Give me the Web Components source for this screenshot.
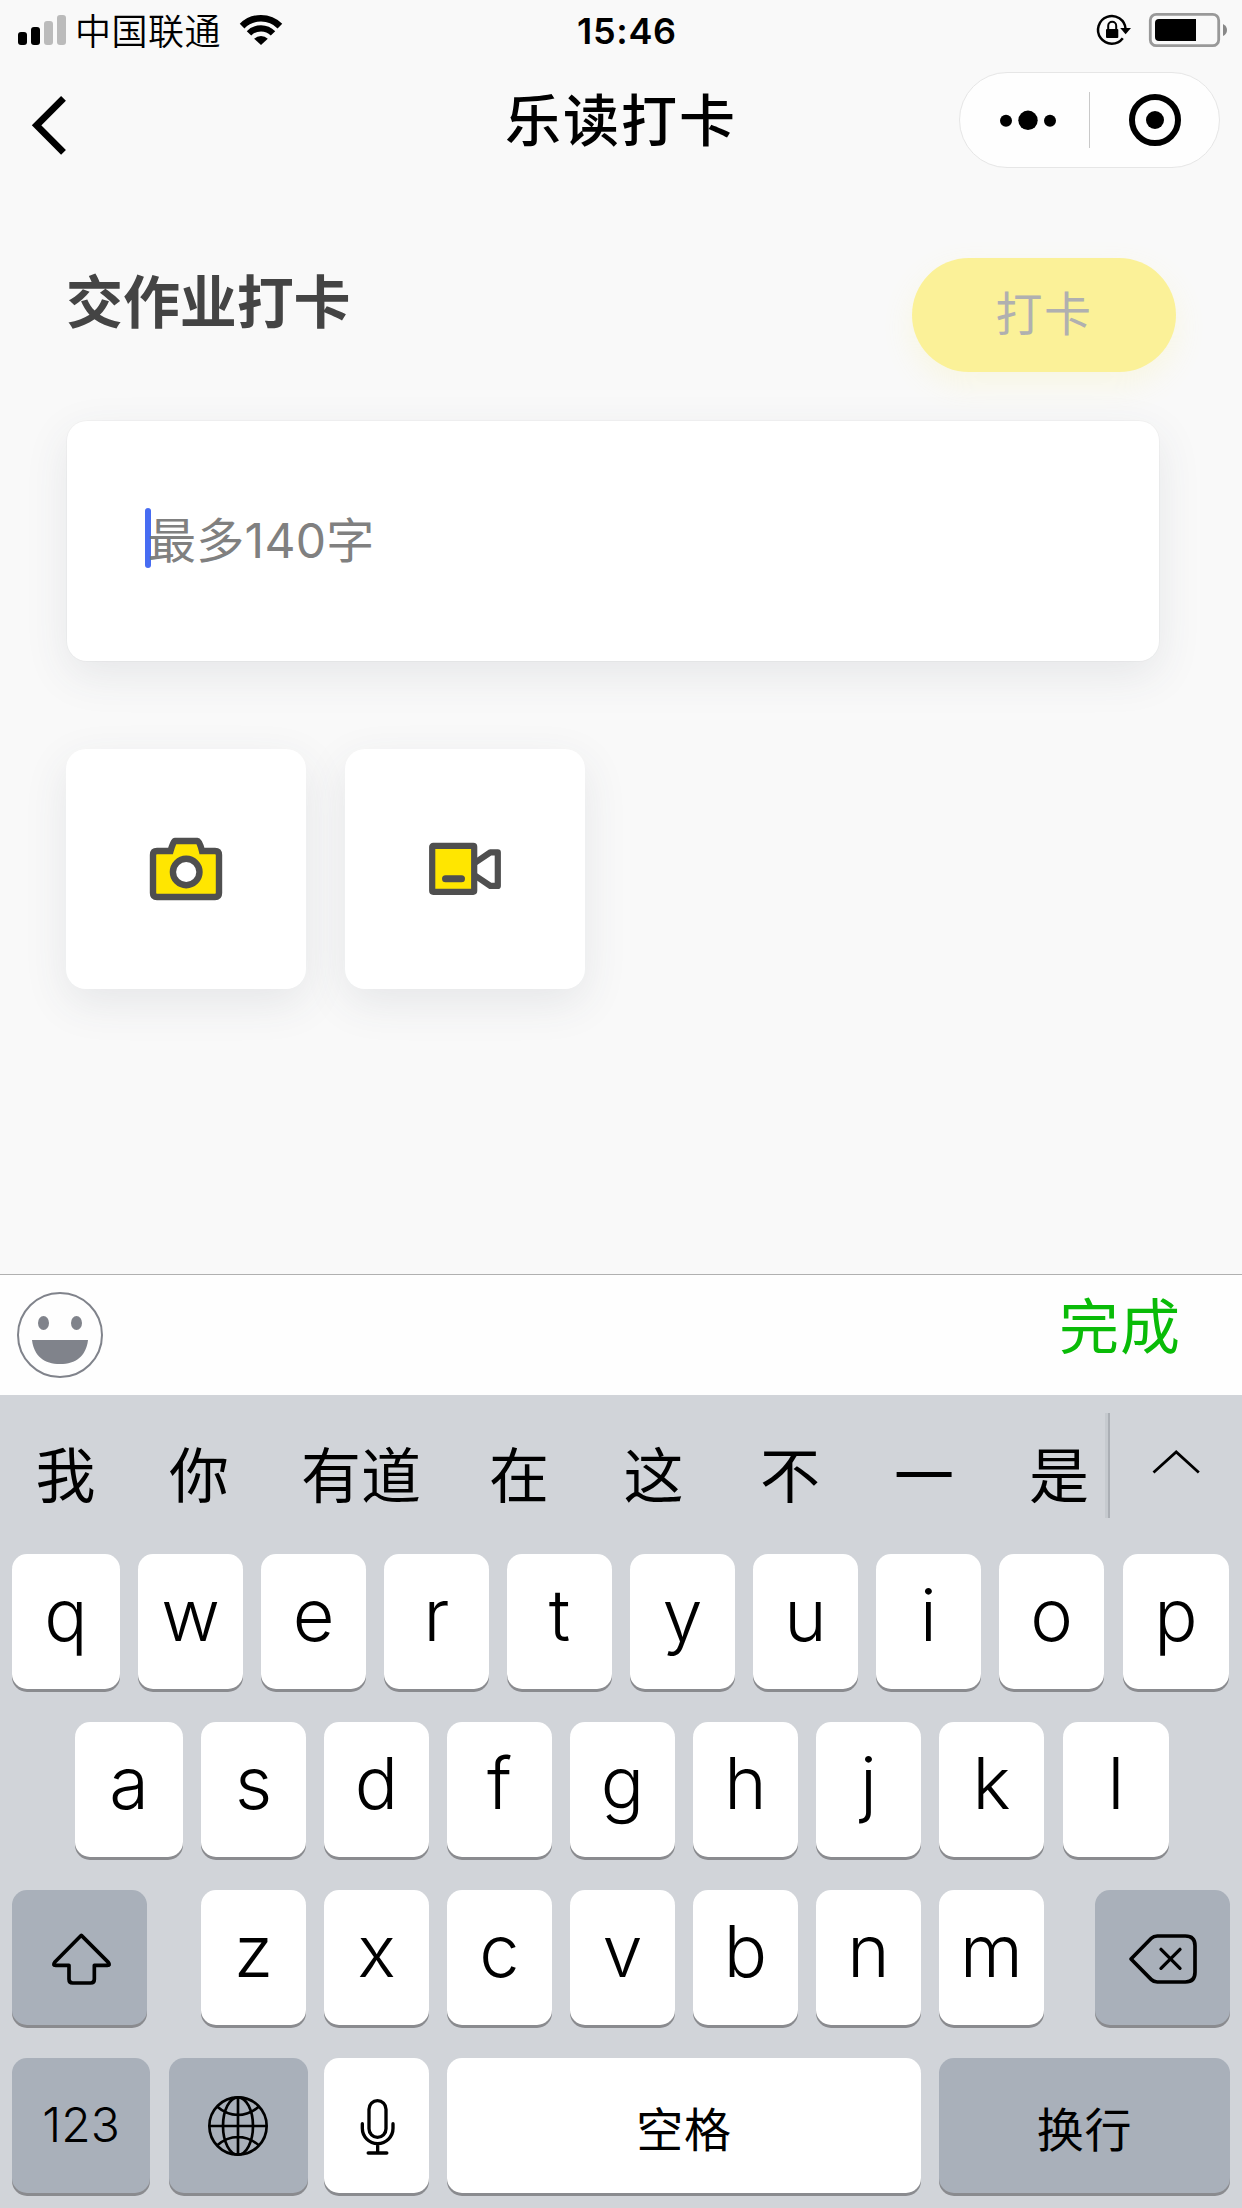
<!DOCTYPE html>
<html lang="zh-CN">
<head>
<meta charset="utf-8">
<title>乐读打卡</title>
<style>
html,body{margin:0;padding:0}
body{width:1242px;height:2208px;overflow:hidden;background:#f9f9f9;font-family:"Noto Sans CJK SC",sans-serif;color:#000}
</style>
</head>
<body>
<checkin-app></checkin-app>
<script>
const define = (name, css, html) => {
  const tpl = document.createElement('template');
  tpl.innerHTML = `<style>*{box-sizing:border-box}svg{display:block;flex:none}${css}</style>${html}`;
  customElements.define(name, class extends HTMLElement {
    constructor() {
      super();
      this.attachShadow({ mode: 'open' }).appendChild(tpl.content.cloneNode(true));
    }
  });
};

define('status-bar', `
:host{display:grid;grid-template-columns:577px 1fr auto;height:60px;padding-right:15px}
.left{display:flex;padding-left:18px}
.carrier{font-size:36px;font-weight:350;line-height:59px;margin-left:9px;letter-spacing:.5px;white-space:nowrap}
.wifi{margin-left:18px}
.time{font:600 36px/62px Inter,sans-serif;letter-spacing:.7px}
.right{display:flex}
`, `
<div class="left">
  <svg width="48" height="60"><rect y="32" width="9" height="13" rx="3"/><rect x="13" y="27" width="9" height="18" rx="3"/><g fill="#bbb"><rect x="26" y="21" width="9" height="24" rx="3"/><rect x="39" y="15" width="9" height="30" rx="3"/></g></svg>
  <span class="carrier">中国联通</span>
  <svg class="wifi" width="44" height="60" viewBox="239 0 44 60"><g fill="none" stroke="#000"><path d="M242.1 26.1A26.7 26.7 0 0 1 279.9 26.1" stroke-width="6.6"/><path d="M249 33.4A16.7 16.7 0 0 1 273 33.4" stroke-width="6.2"/></g><path d="M261 45L254.2 38.8A9.6 9.6 0 0 1 267.8 38.8Z"/></svg>
</div>
<div class="time">15:46</div>
<div class="right">
  <svg width="132" height="60" viewBox="1095 0 132 60">
    <path d="M1122.8 38.2A13.8 13.8 0 1 1 1125.6 29" fill="none" stroke="#000" stroke-width="2.5"/>
    <path d="M1120.2 28H1131L1125.6 34.3Z"/>
    <rect x="1106" y="29" width="12.3" height="9" rx="1"/><path d="M1108.2 30V25.8a4 4 0 0 1 8 0V30" fill="none" stroke="#000" stroke-width="2"/>
    <rect x="1150.3" y="14.3" width="68.4" height="31.4" rx="6" fill="none" stroke="#999" stroke-width="2.8"/>
    <path d="M1159 19H1196V41H1159Q1155 41 1155 37V23Q1155 19 1159 19Z"/>
    <path d="M1223 24Q1227 26 1227 30T1223 36Z" fill="#888"/>
  </svg>
</div>`);

define('capsule-menu', `
:host{display:flex;width:261px;height:96px;border:1px solid #e6e6e6;border-radius:48px;background:#fefefe}
`, `<svg width="259" height="94" viewBox="960 73 259 94"><circle cx="1006" cy="120.8" r="6"/><circle cx="1028" cy="120.3" r="9.7"/><circle cx="1050" cy="120.8" r="6"/><path d="M1089.5 92V148" stroke="#c9c9c9"/><circle cx="1155" cy="120" r="23" fill="none" stroke="#000" stroke-width="6"/><circle cx="1155" cy="120" r="9"/></svg>`);

define('nav-bar', `
:host{display:grid;grid-template-columns:1fr auto 1fr;height:132px;padding:12px 22px 0 31px}
.back{margin-top:18px}
.title{font-size:56px;font-weight:500;line-height:90px;height:108px;letter-spacing:2px;padding-right:9px}
.menu{justify-self:end}
`, `
<svg class="back" width="40" height="70" viewBox="31 90 40 70"><path d="M63.5 98.4L36.6 125.3L63.5 152.4" fill="none" stroke="#000" stroke-width="6.8"/></svg>
<div class="title"><slot></slot></div>
<div class="menu"><capsule-menu></capsule-menu></div>`);

define('submit-button', `
:host{display:flex;justify-content:center;width:264px;height:114px;border-radius:57px;background:#fbf198;color:#b0b0b0;font-size:47px;line-height:106px;letter-spacing:1.6px;box-shadow:0 12px 30px rgba(250,235,110,.16)}
`, `<slot></slot>`);

define('page-heading', `
:host{display:flex;justify-content:space-between;padding:66px 66px 0 66px;height:229px}
.text{font-size:57px;font-weight:700;line-height:80px;letter-spacing:-.1px;color:#444}
`, `<div class="text"><slot></slot></div><slot name="action"></slot>`);

define('note-field', `
:host{display:flex;align-items:flex-start;margin:0 83px 0 67px;height:240px;padding-top:87px;padding-left:78px;border-radius:20px;background:#fff;box-shadow:0 0 0 1px rgba(0,0,0,.025),0 14px 44px rgba(60,65,90,.1)}
.caret{width:6px;height:60px;border-radius:3px;background:#476cf2}
.hint{font:400 48px/65px Inter,"Noto Sans CJK SC",sans-serif;letter-spacing:.3px;color:#808080;margin-left:-3px;white-space:nowrap}
`, `<div class="caret"></div><div class="hint"><slot></slot></div>`);

define('media-tile', `
:host{display:flex;width:240px;height:240px;border-radius:20px;background:#fff;box-shadow:0 14px 44px rgba(60,65,90,.1)}
`, `<slot></slot>`);

define('media-row', `
:host{display:flex;gap:39px;padding:88px 0 0 66px;height:613px}
`, `
<media-tile><svg width="240" height="240" viewBox="-84 -88 240 240"><path d="M7 14H20.5Q23.5 4 25 4H47.5Q49.5 4 52 14H65Q69 14 69 18V56Q69 60 65 60H7Q3 60 3 56V18Q3 14 7 14Z" fill="#ffe600" stroke="#4f4f4f" stroke-width="6.4"/><ellipse cx="36.2" cy="35" rx="13.3" ry="13.2" fill="#fff" stroke="#4f4f4f" stroke-width="6.4"/></svg></media-tile>
<media-tile><svg width="240" height="240" viewBox="-84 -93 240 240" stroke="#4f4f4f" stroke-width="6.2" stroke-linejoin="round"><path d="M46 20.8L61.3 10.4H68.8V43.9H61.3L46 33.5" fill="none"/><rect x="3.2" y="3.8" width="42" height="46" rx="1" fill="#ffe600"/><path d="M16.5 36.8H32.5" stroke-width="7" stroke-linecap="round"/></svg></media-tile>`);

define('input-toolbar', `
:host{display:flex;justify-content:space-between;height:121px;border-top:1px solid #b0b0b0;background:#fefefe;padding:17px 61px 0 17px}
.done{font-size:60px;line-height:62px;letter-spacing:1px;color:#09bb07}
`, `
<svg width="86" height="86" viewBox="17 1292 86 86"><circle cx="60" cy="1335" r="42" fill="none" stroke="#80838b" stroke-width="2"/><g fill="#80838b"><ellipse cx="43.5" cy="1323" rx="5.5" ry="7"/><ellipse cx="76.5" cy="1323" rx="5.5" ry="7"/><path d="M32 1340H88C86 1356 76 1364 60 1364S34 1356 32 1340Z"/></g></svg>
<div class="done"><slot></slot></div>`);

define('candidate-strip', `
:host{display:flex;height:159px}
.words{display:grid;grid-template-columns:131px 136px 188px 128px 141px 132px 136px 134px;width:1105px;font-size:60px;line-height:154px;white-space:nowrap;text-align:center}
`, `
<div class="words"><slot></slot></div>
<svg width="120" height="159" viewBox="1105 1395 120 159"><rect x="1105" y="1413" width="3" height="105" fill="#c6cacf"/><rect x="1108" y="1413" width="2" height="105" fill="#abafb5"/><path d="M1153.5 1472.5L1176.2 1452L1198.8 1472.5" fill="none" stroke="#000" stroke-width="2.8"/></svg>`);

define('key-row', `
:host{display:flex;height:135px;margin-bottom:33px;gap:18px;padding-left:12px}
:host([indent]){padding-left:75px}
`, `<slot></slot>`);

define('key-cap', `
:host{display:flex;justify-content:center;flex:none;width:105px;height:135px;border-radius:15px;background:#fff;box-shadow:0 3px 0 #8a8b8f;font:350 72px/122px Inter,sans-serif;font-optical-sizing:none}
:host([wide]){width:108px}
:host([fn]){background:#a9b0ba}
:host([num]){font-size:48px;line-height:133px;width:138px;margin-right:1px}
:host([word]){font:400 47px/137px "Noto Sans CJK SC",sans-serif;letter-spacing:.8px}
`, `<slot></slot>`);

define('pinyin-keyboard', `
:host{display:block;height:813px;background:#d1d4d9}
`, `
<candidate-strip><span>我</span><span>你</span><span>有道</span><span>在</span><span>这</span><span>不</span><span>一</span><span>是</span></candidate-strip>
<key-row><key-cap wide>q</key-cap><key-cap>w</key-cap><key-cap>e</key-cap><key-cap>r</key-cap><key-cap>t</key-cap><key-cap>y</key-cap><key-cap>u</key-cap><key-cap>i</key-cap><key-cap>o</key-cap><key-cap style="width:106px;margin-left:1px">p</key-cap></key-row>
<key-row indent><key-cap wide>a</key-cap><key-cap>s</key-cap><key-cap>d</key-cap><key-cap>f</key-cap><key-cap>g</key-cap><key-cap>h</key-cap><key-cap>j</key-cap><key-cap>k</key-cap><key-cap style="width:106px;margin-left:1px">l</key-cap></key-row>
<key-row><key-cap fn style="width:135px;margin-right:36px"><svg width="135" height="135" viewBox="36 570 405 405"><path d="M244 706L164 787Q157 796 167 796H207V838Q207 849 218 849H272Q283 849 283 838V796H322Q332 796 325 787Z" fill="none" stroke="#000" stroke-width="11" stroke-linejoin="round"/></svg></key-cap><key-cap>z</key-cap><key-cap>x</key-cap><key-cap>c</key-cap><key-cap>v</key-cap><key-cap>b</key-cap><key-cap>n</key-cap><key-cap>m</key-cap><key-cap fn style="width:135px;margin-left:33px"><svg width="135" height="135" viewBox="765 570 405 405"><g fill="none" stroke="#000" stroke-width="11" stroke-linejoin="round" stroke-linecap="round"><path d="M873 777L934 715Q941 708 952 708H1036Q1065 708 1065 737V817Q1065 846 1036 846H952Q941 846 934 839Z"/><path d="M963 748L1020 805M1020 748L963 805" stroke-width="10"/></g></svg></key-cap></key-row>
<key-row><key-cap fn num>123</key-cap><key-cap fn style="width:139px;margin-right:-2px"><svg width="139" height="135" viewBox="507 1074 417 405"><g fill="none" stroke="#000" stroke-width="8"><circle cx="714" cy="1278" r="86"/><ellipse cx="714" cy="1278" rx="45" ry="86"/><path d="M714 1192V1364M628 1278H800M650 1219Q680 1245 714 1245T778 1219M650 1337Q680 1311 714 1311T778 1337"/></g></svg></key-cap><key-cap><svg width="105" height="135" viewBox="972 1074 315 405"><g fill="none" stroke="#000" stroke-width="10" stroke-linecap="round"><rect x="1107" y="1202" width="51" height="110" rx="25.5"/><path d="M1087 1271V1285A46 46 0 0 0 1179 1285V1271M1133 1331V1355"/><path d="M1105 1359H1160" stroke-width="11"/></g></svg></key-cap><key-cap word style="width:474px">空格</key-cap><key-cap fn word style="width:291px">换行</key-cap></key-row>`);

define('checkin-app', `
:host{display:flex;flex-direction:column;width:1242px;height:2208px;background:#f9f9f9}
`, `
<status-bar></status-bar>
<nav-bar>乐读打卡</nav-bar>
<page-heading>交作业打卡<submit-button slot="action">打卡</submit-button></page-heading>
<note-field>最多140字</note-field>
<media-row></media-row>
<input-toolbar>完成</input-toolbar>
<pinyin-keyboard></pinyin-keyboard>`);
</script>
</body>
</html>
